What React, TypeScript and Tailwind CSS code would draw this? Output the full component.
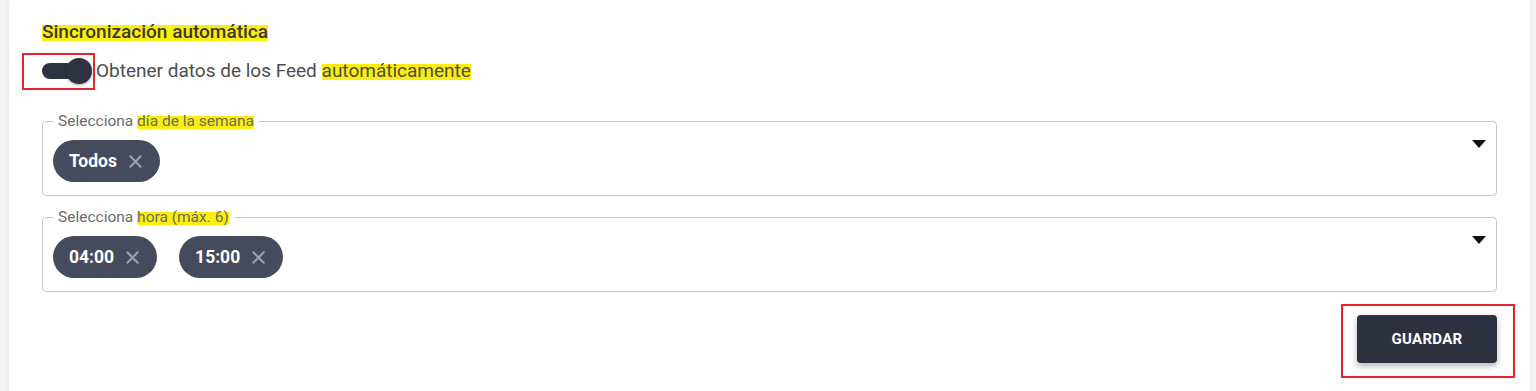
import React, { useState } from "react";

const font = { fontFamily: "Roboto, 'Liberation Sans', sans-serif" };

function Mark({ children }: { children: React.ReactNode }) {
  return (
    <span className="rounded-sm bg-[linear-gradient(transparent_22%,#fbef0a_22%,#fbef0a_92%,transparent_92%)]">
      {children}
    </span>
  );
}

function Chip({ label }: { label: string }) {
  return (
    <span className="inline-flex h-[42px] items-center gap-[11px] rounded-full bg-[#454b5d] pl-4 pr-[17px] text-[17.5px] font-bold text-white">
      {label}
      <svg width="15" height="15" viewBox="0 0 16 16" className="text-[#9da1ab]">
        <path d="M2.5 2.5l11 11M13.5 2.5l-11 11" stroke="currentColor" strokeWidth="2.3" strokeLinecap="round" />
      </svg>
    </span>
  );
}

function MultiSelect({ highlight, chips }: { highlight: string; chips: string[] }) {
  return (
    <fieldset className="flex items-start rounded border border-[#c8c8c8] pb-[13px] pl-[10px] pr-[10px] pt-[11px]">
      <legend className="px-[5px] text-[15.5px] leading-4 text-[#6b6b6b]">
        Selecciona <Mark>{highlight}</Mark>
      </legend>
      <div className="flex gap-[22px]">
        {chips.map((c) => (
          <Chip key={c} label={c} />
        ))}
      </div>
      <svg width="14" height="8" viewBox="0 0 14 8" className="ml-auto">
        <path d="M0 0h14L7 8z" fill="#111" />
      </svg>
    </fieldset>
  );
}

export default function App() {
  const [on, set] = useState(true);

  return (
    <div className="min-h-[391px] bg-[#f4f4f5] pr-[6px]" style={font}>
      <div className="ml-[9px] min-h-[391px] bg-white px-[33px] pt-[22px] shadow-[0_0_6px_rgba(0,0,0,0.08)]">
        <h2 className="text-[19px] font-medium leading-5 text-[#3a3a3a]">
          <Mark>Sincronización automática</Mark>
        </h2>
        <div className="mt-[15px] flex items-center text-[19px] leading-5 text-[#4d4d4d]">
          <span className="relative mr-[4px] flex h-[28px] w-[50px] items-center">
            <span
              onClick={() => set((p) => !p)}
              className="relative h-[16px] w-[46px] cursor-pointer rounded-full bg-[#2e3243]"
            >
              <span
                className={
                  on
                    ? "absolute right-[-4px] top-[-5px] h-[26px] w-[26px] rounded-full bg-[#2e3243] shadow-[0_1px_3px_rgba(0,0,0,0.35)]"
                    : "absolute left-[-4px] top-[-5px] h-[26px] w-[26px] rounded-full bg-[#f5f5f5] shadow-[0_1px_3px_rgba(0,0,0,0.35)]"
                }
              />
            </span>
            <span className="pointer-events-none absolute bottom-[-5px] left-[-20px] right-[-3px] top-[-4px] border-2 border-[#e3262b]" />
          </span>
          <span>
            Obtener datos de los Feed <Mark>automáticamente</Mark>
          </span>
        </div>

        <div className="mt-[28px] flex flex-col gap-[13px]">
          <MultiSelect highlight="día de la semana" chips={["Todos"]} />
          <MultiSelect highlight="hora (máx. 6)" chips={["04:00", "15:00"]} />
        </div>

        <div className="mt-[23px] flex justify-end">
          <div className="relative">
            <button className="h-[48px] w-[140px] rounded bg-[#2d3140] text-[15px] font-bold uppercase tracking-[0.3px] text-white shadow-[0_3px_6px_rgba(0,0,0,0.3)]">
              Guardar
            </button>
            <span className="pointer-events-none absolute bottom-[-15px] left-[-16px] right-[-18px] top-[-11px] border-2 border-[#e3262b]" />
          </div>
        </div>
      </div>
    </div>
  );
}
